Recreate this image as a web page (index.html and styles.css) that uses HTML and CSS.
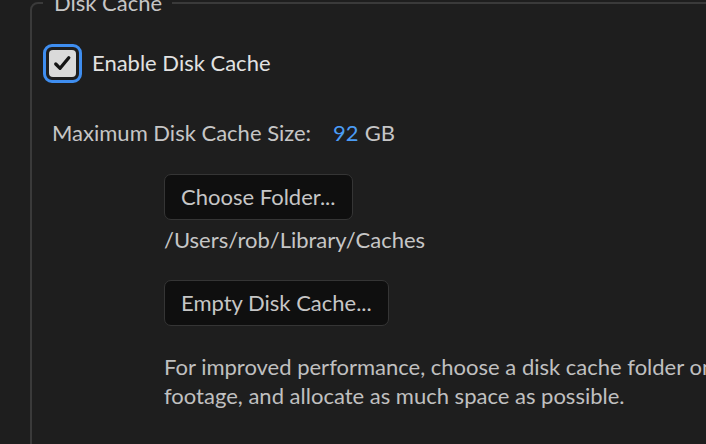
FILE: index.html
```html
<!DOCTYPE html>
<html lang="en">
<head>
<meta charset="utf-8">
<title>Disk Cache</title>
<link rel="stylesheet" href="styles.css">
</head>
<body>
<fieldset class="group">
  <legend class="group-title">Disk Cache</legend>
  <label class="check-row">
    <span class="checkbox">
      <span class="checkbox-box">
        <svg class="checkbox-mark" viewBox="0 0 28 28" width="28" height="28" aria-hidden="true">
          <polyline points="7,14.5 11.5,19 20.5,8" fill="none" stroke="#151515" stroke-width="3.4" stroke-linecap="round" stroke-linejoin="round"/>
        </svg>
      </span>
    </span>
    <span class="check-label">Enable Disk Cache</span>
  </label>
  <div class="size-row">
    <span class="size-label">Maximum Disk Cache Size:</span>
    <span class="size-value">92</span>
    <span class="size-unit">GB</span>
  </div>
  <div class="indent">
    <button class="btn" type="button">Choose Folder...</button>
    <div class="path">/Users/rob/Library/Caches</div>
    <button class="btn btn-empty" type="button">Empty Disk Cache...</button>
    <p class="desc">For improved performance, choose a disk cache folder on a fast drive separate from your project<br>footage, and allocate as much space as possible.</p>
  </div>
</fieldset>
</body>
</html>
```
FILE: styles.css
```css
html, body {
  margin: 0;
  padding: 0;
  background: #1e1e1e;
  overflow: hidden;
  width: 706px;
  height: 444px;
}

body {
  font-family: "Lato", "Open Sans", sans-serif;
  font-size: 22px;
  color: #c6c6c6;
}

.group {
  margin: -11px 0 0 30px;
  width: 900px;
  min-height: 520px;
  box-sizing: border-box;
  border: 2px solid #3a3a3a;
  border-radius: 8px;
  padding: 0 0 0 11px;
}

.group-title {
  padding: 0 10px 0 11px;
  line-height: 28px;
  color: #c6c6c6;
}

.check-row {
  display: flex;
  align-items: center;
  gap: 10px;
  margin-top: 27px;
}

.checkbox {
  display: flex;
  width: 39px;
  height: 39px;
  box-sizing: border-box;
  border: 3px solid #3f8ef0;
  border-radius: 9px;
  padding: 3px;
}

.checkbox-box {
  display: flex;
  flex: 1;
  background: #dadada;
  border-radius: 4px;
}

.checkbox-mark {
  display: block;
  width: 27px;
  height: 27px;
}

.check-label {
  line-height: 28px;
  margin-top: -2px;
  color: #e2e2e2;
}

.size-row {
  display: flex;
  align-items: baseline;
  margin: 36px 0 0 9px;
  line-height: 28px;
}

.size-value {
  margin-left: 22px;
  color: #4b9cf5;
}

.size-unit {
  margin-left: 6px;
}

.indent {
  display: flex;
  flex-direction: column;
  align-items: flex-start;
  margin: 27px 0 0 121px;
}

.btn {
  font-family: inherit;
  font-size: 22px;
  line-height: 26px;
  height: 46px;
  box-sizing: border-box;
  color: #c6c6c6;
  background: #0f0f0f;
  border: 1px solid #353535;
  border-radius: 7px;
  padding: 0 16px;
  margin: 0;
}

.path {
  line-height: 28px;
  margin-top: 6px;
}

.btn-empty {
  margin-top: 26px;
}

.desc {
  margin: 26px 0 0;
  line-height: 29px;
  white-space: nowrap;
  color: #c0c0c0;
}
```
